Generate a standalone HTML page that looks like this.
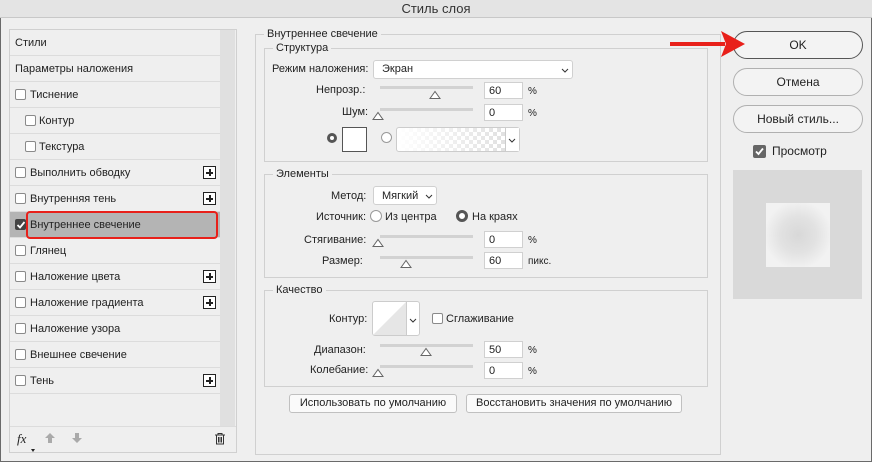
<!DOCTYPE html>
<html><head><meta charset="utf-8"><style>
*{box-sizing:border-box;margin:0;padding:0}
body{width:872px;height:462px;background:#efefef;font-family:"Liberation Sans",sans-serif;font-size:11px;color:#222;position:relative;overflow:hidden}
.a{position:absolute}
.t{position:absolute;white-space:nowrap;line-height:13px}
.row{position:absolute;left:10px;width:210px;height:26px;border-bottom:1px solid #dcdcdc}
.row span{position:absolute;top:7px;white-space:nowrap}
.cb{position:absolute;width:11px;height:11px;border:1px solid #8a8a8a;border-radius:2px;background:#fff}
.plus{position:absolute;left:193px;top:6px;width:13px;height:13px;border:1px solid #222;background:#fff}
.plus:before{content:"";position:absolute;left:2px;top:5px;width:7px;height:1.5px;background:#222}
.plus:after{content:"";position:absolute;left:5px;top:2px;width:1.5px;height:7px;background:#222}
.grp{position:absolute;border:1px solid #d0d0d0}
.lg{position:absolute;top:-7px;left:8px;background:#efefef;padding:0 3px;line-height:13px}
.inp{position:absolute;width:39px;height:17px;background:#fff;border:1px solid #d0d0d0;padding:2px 4px;line-height:12px}
.sl{position:absolute;height:3px;background:#d2d2d2;width:93px}
.th{position:absolute;width:12px;height:10px}
.lbl{position:absolute;text-align:right;white-space:nowrap;line-height:13px}
.btn{position:absolute;border:1px solid #b0b0b0;border-radius:14px;background:#f3f3f3;text-align:center;font-size:12px}
.sbtn{position:absolute;border:1px solid #c0c0c0;border-radius:3px;background:#fafafa;text-align:center;height:19px;line-height:17px}
.rad{position:absolute;width:12px;height:12px;border:1px solid #999;border-radius:50%;background:#fff}
.chev{position:absolute;width:8px;height:5px}
</style></head><body>
<div class="a" style="left:0;top:0;width:872px;height:18px;background:#e4e4e4;border-bottom:1px solid #c8c8c8"></div>
<div class="t" style="left:0;width:872px;top:2px;text-align:center;font-size:13px;color:#333">Стиль слоя</div>
<div class="a" style="left:0;top:18px;width:872px;height:444px;border:1px solid #6a6a6a;border-top:none"></div>

<div class="a" style="left:9px;top:29px;width:228px;height:424px;border:1px solid #d0d0d0"></div>
<div class="a" style="left:220px;top:30px;width:15px;height:396px;background:#e0e0e0"></div>
<div class="row" style="top:30px"><span style="left:5px">Стили</span></div>
<div class="row" style="top:56px"><span style="left:5px">Параметры наложения</span></div>
<div class="row" style="top:82px"><div class="cb" style="left:5px;top:7px"></div><span style="left:20px">Тиснение</span></div>
<div class="row" style="top:108px"><div class="cb" style="left:15px;top:7px"></div><span style="left:29px">Контур</span></div>
<div class="row" style="top:134px"><div class="cb" style="left:15px;top:7px"></div><span style="left:29px">Текстура</span></div>
<div class="row" style="top:160px"><div class="cb" style="left:5px;top:7px"></div><span style="left:20px">Выполнить обводку</span><div class="plus"></div></div>
<div class="row" style="top:186px"><div class="cb" style="left:5px;top:7px"></div><span style="left:20px">Внутренняя тень</span><div class="plus"></div></div>
<div class="row" style="top:212px;background:#b4b4b4"><div class="cb" style="left:5px;top:7px;background:#444;border-color:#444"></div><svg class="a" style="left:6px;top:8px" width="10" height="10"><path d="M1.5 5L4 7.5L8.5 2" stroke="#fff" stroke-width="1.8" fill="none"/></svg><span style="left:20px">Внутреннее свечение</span></div>
<div class="a" style="left:26px;top:211px;width:192px;height:28px;border:2px solid #e8201a;border-radius:4px"></div>
<div class="row" style="top:238px"><div class="cb" style="left:5px;top:7px"></div><span style="left:20px">Глянец</span></div>
<div class="row" style="top:264px"><div class="cb" style="left:5px;top:7px"></div><span style="left:20px">Наложение цвета</span><div class="plus"></div></div>
<div class="row" style="top:290px"><div class="cb" style="left:5px;top:7px"></div><span style="left:20px">Наложение градиента</span><div class="plus"></div></div>
<div class="row" style="top:316px"><div class="cb" style="left:5px;top:7px"></div><span style="left:20px">Наложение узора</span></div>
<div class="row" style="top:342px"><div class="cb" style="left:5px;top:7px"></div><span style="left:20px">Внешнее свечение</span></div>
<div class="row" style="top:368px"><div class="cb" style="left:5px;top:7px"></div><span style="left:20px">Тень</span><div class="plus"></div></div>
<div class="a" style="left:10px;top:426px;width:226px;height:1px;background:#dcdcdc"></div>
<div class="t" style="left:17px;top:432px;font-style:italic;font-size:13px;font-family:'Liberation Serif',serif">fx</div>
<div class="a" style="left:31px;top:449px;width:0;height:0;border-left:2px solid transparent;border-right:2px solid transparent;border-top:3px solid #222"></div>
<svg class="a" style="left:44px;top:432px" width="12" height="12"><path d="M6 1L11 6H8V11H4V6H1Z" fill="#aaa"/></svg>
<svg class="a" style="left:71px;top:432px" width="12" height="12"><path d="M6 11L11 6H8V1H4V6H1Z" fill="#aaa"/></svg>
<svg class="a" style="left:214px;top:432px" width="12" height="13"><path d="M1 3H11M4 3V1.5H8V3M2.5 3.5V12H9.5V3.5M4.5 5V10.5M6 5V10.5M7.5 5V10.5" stroke="#333" fill="none" stroke-width="1"/></svg>

<div class="grp" style="left:255px;top:34px;width:466px;height:421px"><div class="lg">Внутреннее свечение</div></div>
<div class="grp" style="left:264px;top:48px;width:444px;height:114px"><div class="lg">Структура</div></div>
<div class="lbl" style="left:272px;top:63px">Режим наложения:</div>
<div class="a" style="left:373px;top:60px;width:200px;height:19px;background:#fff;border:1px solid #d0d0d0;border-radius:3px"></div>
<div class="t" style="left:382px;top:63px">Экран</div>
<svg class="chev" style="left:561px;top:68px"><path d="M1 1L4 4L7 1" stroke="#333" fill="none"/></svg>
<div class="lbl" style="left:316px;top:84px">Непрозр.:</div>
<div class="sl" style="left:380px;top:86px"></div>
<svg class="th" style="left:429px;top:89px"><path d="M1 9.5L6 2.5L11 9.5Z" fill="#fff" stroke="#666"/></svg>
<div class="inp" style="left:484px;top:82px">60</div><div class="t" style="left:528px;top:85px;font-size:10px">%</div>
<div class="lbl" style="left:342px;top:106px">Шум:</div>
<div class="sl" style="left:380px;top:108px"></div>
<svg class="th" style="left:372px;top:110px"><path d="M1 9.5L6 2.5L11 9.5Z" fill="#fff" stroke="#666"/></svg>
<div class="inp" style="left:484px;top:104px">0</div><div class="t" style="left:528px;top:107px;font-size:10px">%</div>
<div class="a" style="left:327px;top:133px;width:10px;height:10px;border-radius:50%;border:3px solid #555;background:#fff"></div>
<div class="a" style="left:342px;top:127px;width:25px;height:25px;border:1px solid #555;background:#fff"></div>
<div class="rad" style="left:381px;top:132px;width:11px;height:11px"></div>
<div class="a" style="left:396px;top:127px;width:124px;height:25px;border:1px solid #ccc;border-radius:3px;background:linear-gradient(90deg,#fff,rgba(255,255,255,0)),repeating-conic-gradient(#ddd 0 25%,#fff 0 50%) 0 0/8px 8px"></div>
<div class="a" style="left:505px;top:128px;width:14px;height:23px;background:#fff;border-left:1px solid #ccc"></div>
<svg class="chev" style="left:508px;top:138px"><path d="M1 1L4 4L7 1" stroke="#333" fill="none"/></svg>

<div class="grp" style="left:264px;top:174px;width:444px;height:104px"><div class="lg">Элементы</div></div>
<div class="lbl" style="left:331px;top:190px">Метод:</div>
<div class="a" style="left:373px;top:186px;width:64px;height:19px;background:#fff;border:1px solid #d0d0d0;border-radius:3px"></div>
<div class="t" style="left:382px;top:190px">Мягкий</div>
<svg class="chev" style="left:425px;top:194px"><path d="M1 1L4 4L7 1" stroke="#333" fill="none"/></svg>
<div class="lbl" style="left:316px;top:211px">Источник:</div>
<div class="rad" style="left:370px;top:210px"></div>
<div class="t" style="left:385px;top:211px">Из центра</div>
<div class="a" style="left:456px;top:210px;width:12px;height:12px;border-radius:50%;border:3.5px solid #555;background:#fff"></div>
<div class="t" style="left:472px;top:211px">На краях</div>
<div class="lbl" style="left:304px;top:234px">Стягивание:</div>
<div class="sl" style="left:380px;top:235px"></div>
<svg class="th" style="left:372px;top:237px"><path d="M1 9.5L6 2.5L11 9.5Z" fill="#fff" stroke="#666"/></svg>
<div class="inp" style="left:484px;top:231px">0</div><div class="t" style="left:528px;top:234px;font-size:10px">%</div>
<div class="lbl" style="left:322px;top:255px">Размер:</div>
<div class="sl" style="left:380px;top:256px"></div>
<svg class="th" style="left:400px;top:258px"><path d="M1 9.5L6 2.5L11 9.5Z" fill="#fff" stroke="#666"/></svg>
<div class="inp" style="left:484px;top:252px">60</div><div class="t" style="left:528px;top:255px;font-size:10px">пикс.</div>

<div class="grp" style="left:264px;top:290px;width:444px;height:97px"><div class="lg">Качество</div></div>
<div class="lbl" style="left:329px;top:313px">Контур:</div>
<div class="a" style="left:372px;top:301px;width:48px;height:35px;border:1px solid #ccc;border-radius:3px;background:#fff;overflow:hidden"></div>
<svg class="a" style="left:373px;top:302px" width="33" height="33"><path d="M0 33L33 0V33Z" fill="#e6e6e6"/></svg>
<div class="a" style="left:406px;top:302px;width:1px;height:33px;background:#ccc"></div>
<svg class="chev" style="left:409px;top:318px"><path d="M1 1L4 4L7 1" stroke="#333" fill="none"/></svg>
<div class="cb" style="left:432px;top:313px"></div>
<div class="t" style="left:446px;top:313px">Сглаживание</div>
<div class="lbl" style="left:314px;top:344px">Диапазон:</div>
<div class="sl" style="left:380px;top:344px"></div>
<svg class="th" style="left:420px;top:346px"><path d="M1 9.5L6 2.5L11 9.5Z" fill="#fff" stroke="#666"/></svg>
<div class="inp" style="left:484px;top:341px">50</div><div class="t" style="left:528px;top:344px;font-size:10px">%</div>
<div class="lbl" style="left:310px;top:364px">Колебание:</div>
<div class="sl" style="left:380px;top:365px"></div>
<svg class="th" style="left:372px;top:367px"><path d="M1 9.5L6 2.5L11 9.5Z" fill="#fff" stroke="#666"/></svg>
<div class="inp" style="left:484px;top:362px">0</div><div class="t" style="left:528px;top:365px;font-size:10px">%</div>
<div class="sbtn" style="left:289px;top:394px;width:168px">Использовать по умолчанию</div>
<div class="sbtn" style="left:466px;top:394px;width:216px">Восстановить значения по умолчанию</div>

<div class="btn" style="left:733px;top:31px;width:130px;height:28px;line-height:26px;border-color:#555">OK</div>
<div class="btn" style="left:733px;top:68px;width:130px;height:28px;line-height:26px">Отмена</div>
<div class="btn" style="left:733px;top:105px;width:130px;height:28px;line-height:26px">Новый стиль...</div>
<div class="a" style="left:753px;top:145px;width:13px;height:13px;border-radius:2px;background:#666"></div>
<svg class="a" style="left:754px;top:146px" width="11" height="11"><path d="M2 5.5L4.5 8L9 2.5" stroke="#fff" stroke-width="1.8" fill="none"/></svg>
<div class="t" style="left:772px;top:145px;font-size:12px">Просмотр</div>
<div class="a" style="left:733px;top:170px;width:129px;height:129px;background:#d9d9d9"></div>
<div class="a" style="left:766px;top:203px;width:64px;height:64px;background:radial-gradient(circle at center,#d8d8d8 0,#e2e2e2 40%,#f2f2f2 75%)"></div>
<div class="a" style="left:670px;top:42px;width:55px;height:4px;background:#e8201a"></div>
<svg class="a" style="left:720px;top:30px" width="26" height="28"><path d="M1 1L25 14L1 27L6 14Z" fill="#e8201a"/></svg>
</body></html>
